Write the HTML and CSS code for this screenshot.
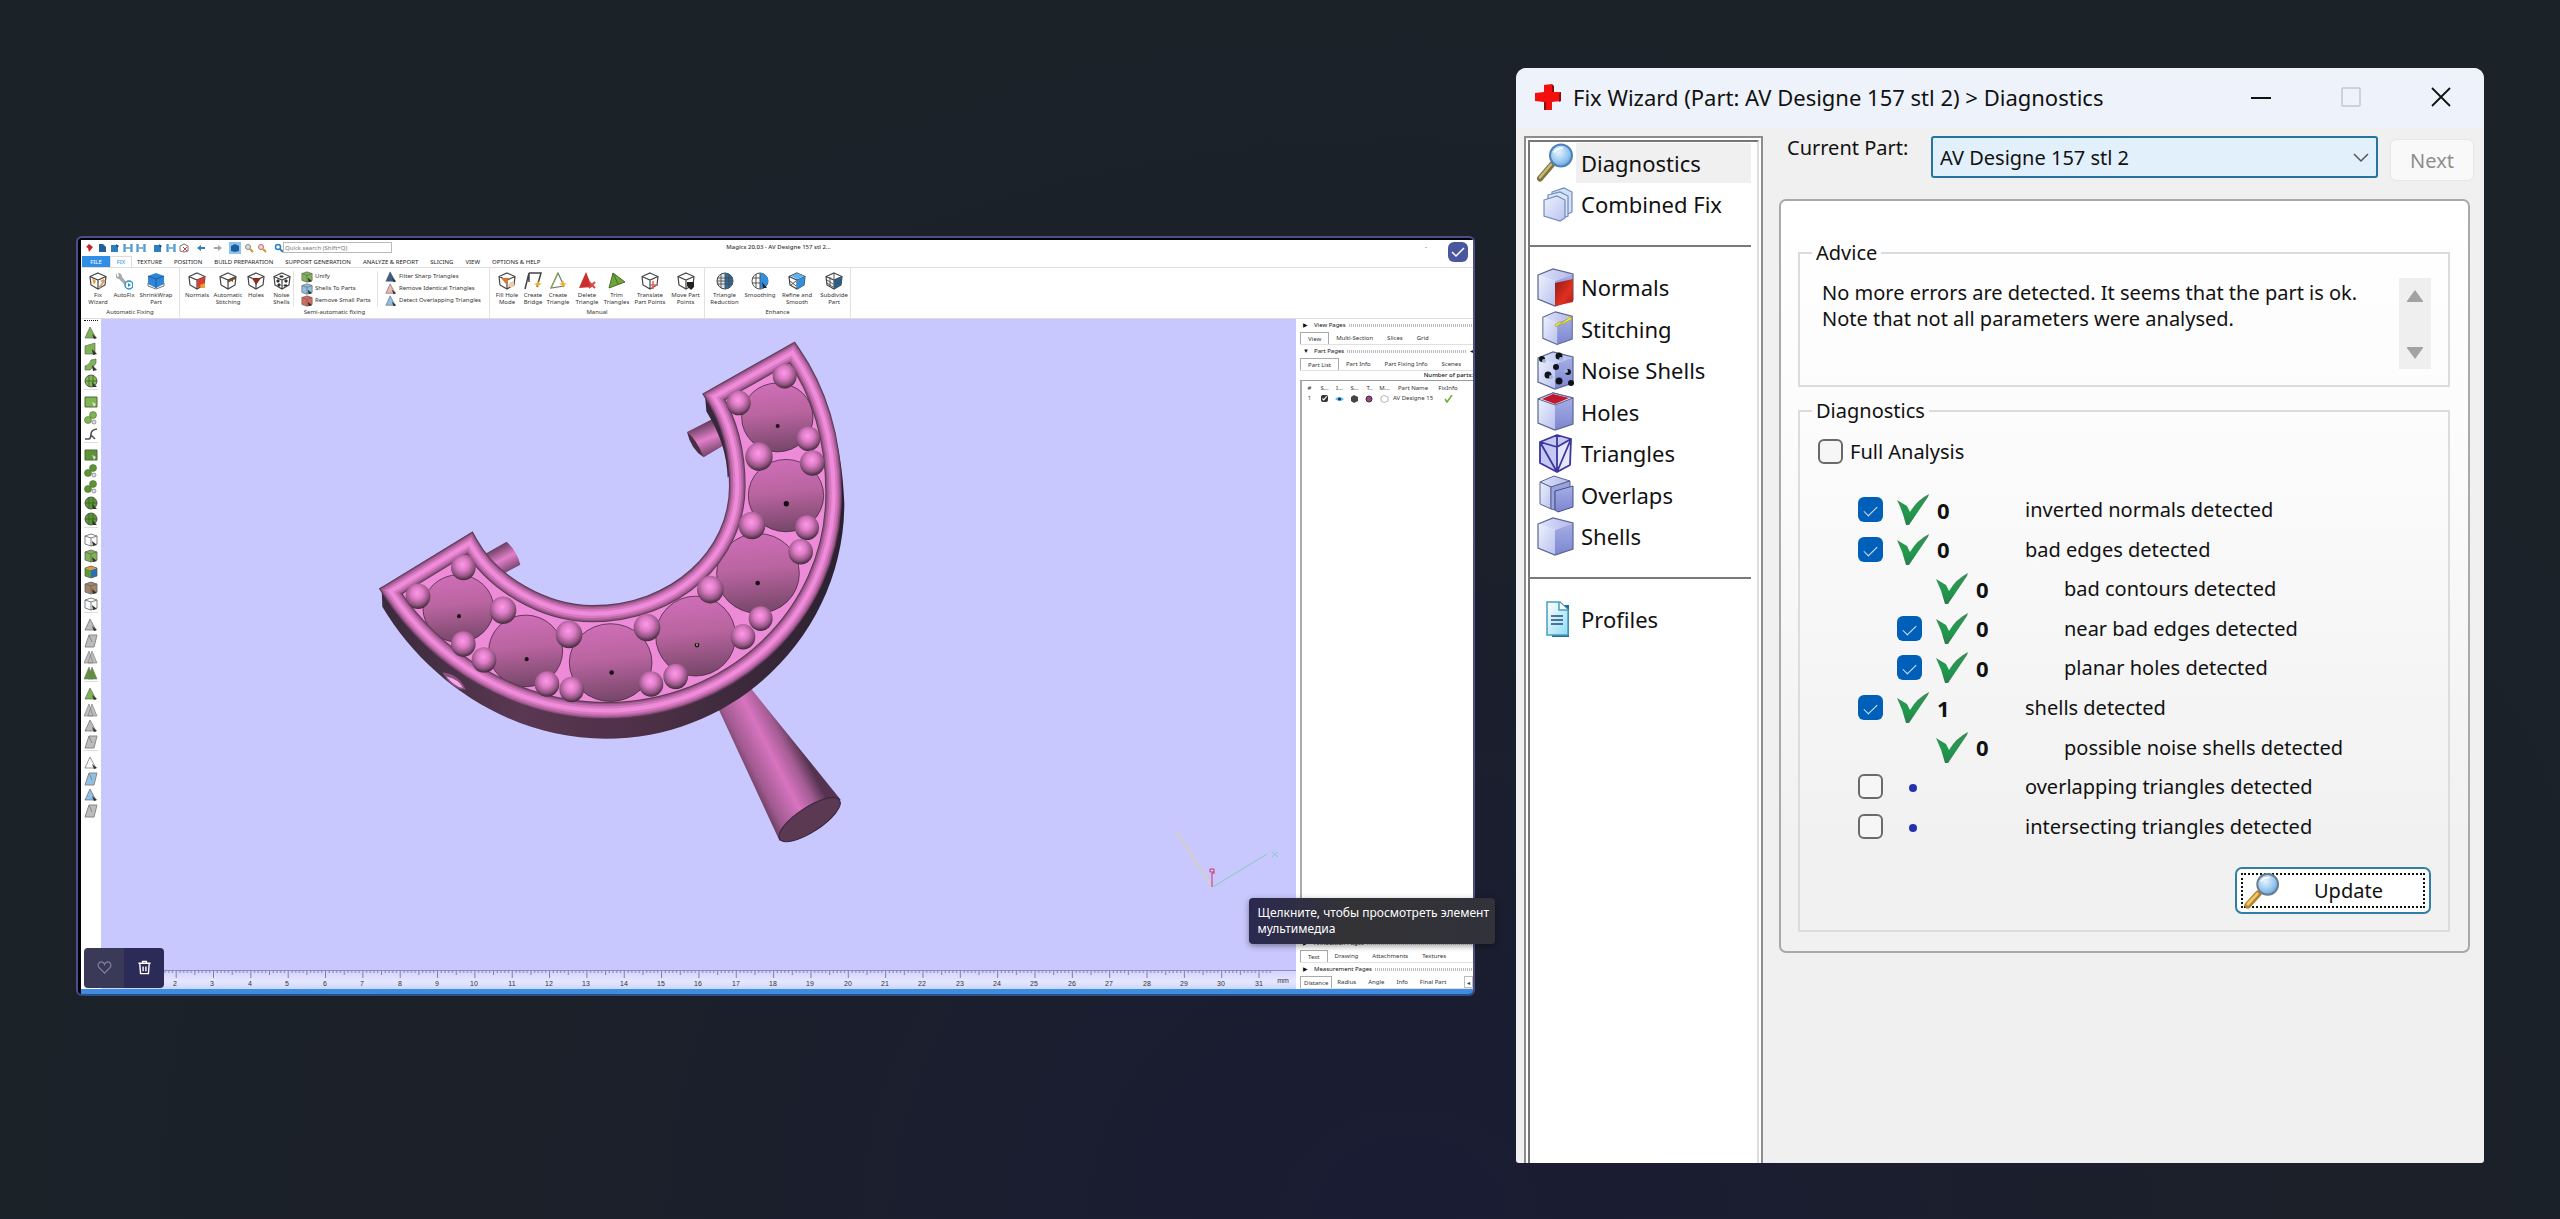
FILE: index.html
```html
<!DOCTYPE html>
<html lang="ru">
<head>
<meta charset="utf-8">
<title>Fix Wizard</title>
<link rel="stylesheet" href="styles.css">
</head>
<body>
<svg class="defs" aria-hidden="true">
  <defs>
    <linearGradient id="faceL" x1="0" y1="0" x2="1" y2="1"><stop offset="0" stop-color="#eef2fd"/><stop offset="1" stop-color="#b9c2ee"/></linearGradient>
    <linearGradient id="faceR" x1="0" y1="0" x2="0" y2="1"><stop offset="0" stop-color="#a5aee6"/><stop offset="1" stop-color="#7d86cf"/></linearGradient>
    <linearGradient id="faceT" x1="0" y1="0" x2="1" y2="0"><stop offset="0" stop-color="#dfe3fa"/><stop offset="1" stop-color="#b4b8ea"/></linearGradient>
    <linearGradient id="redFace" x1="0" y1="0" x2="1" y2="1"><stop offset="0" stop-color="#8f1a1a"/><stop offset=".6" stop-color="#e0301f"/><stop offset="1" stop-color="#b01c1c"/></linearGradient>
    <radialGradient id="lens" cx=".4" cy=".35" r=".7"><stop offset="0" stop-color="#e6f4fe"/><stop offset=".7" stop-color="#8dc1ee"/><stop offset="1" stop-color="#5d97d0"/></radialGradient>
    <linearGradient id="tickG" x1="0" y1="0" x2="0" y2="1"><stop offset="0" stop-color="#3f8a5c"/><stop offset=".6" stop-color="#1f9a4b"/><stop offset="1" stop-color="#2f7a50"/></linearGradient>
    <linearGradient id="page" x1="0" y1="0" x2="1" y2="1"><stop offset="0" stop-color="#fff"/><stop offset="1" stop-color="#8fdcf5"/></linearGradient>
    <linearGradient id="cone" x1=".45" y1="0" x2=".55" y2="1"><stop offset="0" stop-color="#cf6eb8"/><stop offset=".45" stop-color="#b9649f"/><stop offset="1" stop-color="#754669"/></linearGradient>
    <radialGradient id="ball" cx=".47" cy=".38" r=".62"><stop offset="0" stop-color="#fb9ae6"/><stop offset=".4" stop-color="#dd7bc6"/><stop offset=".75" stop-color="#945583"/><stop offset="1" stop-color="#3f273a"/></radialGradient>
    <linearGradient id="handle" gradientUnits="userSpaceOnUse" x1="1150" y1="1320" x2="1320" y2="1230"><stop offset="0" stop-color="#5a3652"/><stop offset=".2" stop-color="#a05a90"/><stop offset=".55" stop-color="#d874c0"/><stop offset=".8" stop-color="#a25c92"/><stop offset="1" stop-color="#553350"/></linearGradient>
    <linearGradient id="pegA" gradientUnits="userSpaceOnUse" x1="1025" y1="295" x2="1060" y2="390"><stop offset="0" stop-color="#5a3652"/><stop offset=".5" stop-color="#e37fcb"/><stop offset="1" stop-color="#6a3f62"/></linearGradient>
    <linearGradient id="pegB" gradientUnits="userSpaceOnUse" x1="405" y1="655" x2="445" y2="735"><stop offset="0" stop-color="#5a3652"/><stop offset=".5" stop-color="#e37fcb"/><stop offset="1" stop-color="#6a3f62"/></linearGradient>
    <linearGradient id="side" x1="0" y1="0" x2="1" y2="0"><stop offset="0" stop-color="#3a2a3c"/><stop offset=".3" stop-color="#5a3752"/><stop offset=".6" stop-color="#4b2f45"/><stop offset="1" stop-color="#2a2130"/></linearGradient>
    <path id="band" d="M95 785 332 645C400 765 560 850 700 850 950 850 1135 680 1135 480 1135 370 1110 290 1065 220L1300 92C1378 200 1424 340 1424 500 1424 860 1110 1131 740 1131 470 1131 230 985 95 785z"/>
  </defs>

  <symbol id="s-find" viewBox="0 0 37 38"><path d="M3 35 15 21" stroke="#7d7340" stroke-width="6" stroke-linecap="round"/><path d="M3 34 14 21" stroke="#c9b878" stroke-width="2.500" stroke-linecap="round"/><circle cx="24" cy="12" r="11" fill="url(#lens)" stroke="#4d82b8" stroke-width="2"/><path d="M17 9q3-5 9-4" stroke="#fff" stroke-width="2" fill="none"/></symbol>
  <symbol id="s-find2" viewBox="0 0 37 38"><path d="M4 34 15 22" stroke="#b5822f" stroke-width="7" stroke-linecap="round"/><path d="M4 33 14 22" stroke="#f3c868" stroke-width="3" stroke-linecap="round"/><circle cx="25" cy="12" r="11" fill="url(#lens)" stroke="#6a7d90" stroke-width="2"/><path d="M18 9q3-5 9-4" stroke="#fff" stroke-width="2" fill="none"/></symbol>
  <symbol id="s-box" viewBox="0 0 37 39"><path d="M1 7 16 1 36 6 18 13z" fill="url(#faceT)"/><path d="M1 7 18 13V38L1 31z" fill="url(#faceL)"/><path d="M18 13 36 6V32L18 38z" fill="url(#faceR)"/><path d="M1 7 16 1 36 6V32L18 38 1 31z" fill="none" stroke="#5a6590" stroke-width="1.200"/></symbol>
  <symbol id="s-combined" viewBox="0 0 37 39"><g stroke="#6f8cba" stroke-width="1.200"><path d="M15 7 27 3 35 7V27L29 30 15 26z" fill="#d3e0f6"/><path d="M11 10 23 7 31 11V31L25 33 11 29z" fill="#dbe6f8"/><path d="M7 15 20 11 28 15V33L23 36 7 31z" fill="url(#faceL)"/></g></symbol>
  <symbol id="s-normals" viewBox="0 0 37 39"><use href="#s-box"/><path d="M18 15 36 11V34L18 38z" fill="url(#redFace)"/></symbol>
  <symbol id="s-stitch" viewBox="0 0 37 39"><g transform="translate(5 2) scale(.84 .88)"><use href="#s-box" width="37" height="39"/></g><path d="m18 16 4-3 3 1 8-6 2 2-9 5-3 0-4 3z" fill="#f5ec28" stroke="#a8a020" stroke-width=".7"/></symbol>
  <symbol id="s-noise" viewBox="0 0 37 39"><use href="#s-box"/><g fill="#10131c"><circle cx="5" cy="8" r="3"/><circle cx="22" cy="5" r="3.500"/><circle cx="19" cy="16" r="3"/><circle cx="11" cy="24" r="3.500"/><circle cx="31" cy="21" r="3"/><circle cx="22" cy="30" r="3.500"/><circle cx="34" cy="32" r="3"/></g><g fill="#9fb4d8"><circle cx="7" cy="10" r="2"/><circle cx="24" cy="8" r="2"/><circle cx="14" cy="26" r="2"/><circle cx="29" cy="20" r="2"/></g></symbol>
  <symbol id="s-holes" viewBox="0 0 37 39"><use href="#s-box"/><path d="M1 7 16 1 36 6 18 13z" fill="#dfe3fa" stroke="#5a6590"/><path d="M5 7 16 2 32 6 18 12z" fill="#c0182c"/></symbol>
  <symbol id="s-tri" viewBox="0 0 37 39"><path d="M3 8 20 1 34 5 33 31 20 38 3 29z" fill="#c5c8f3"/><path d="M20 13 34 5 33 31 20 38z" fill="#e6e6fb"/><path d="M3 8 20 1 34 5 20 13zM3 8V29L20 38V13M20 38 33 31 34 5 20 38 3 8M20 1V13" fill="none" stroke="#3b369c" stroke-width="1.800" stroke-linejoin="round"/></symbol>
  <symbol id="s-over" viewBox="0 0 37 39"><path d="M3 7 17 1 33 6 14 12z" fill="url(#faceT)" stroke="#5a6590"/><path d="M3 7 14 12V34L3 29z" fill="url(#faceL)" stroke="#5a6590"/><path d="M14 12 33 6V14L18 16V35L14 34z" fill="#9aa3de" stroke="#5a6590"/><path d="M18 16 36 11V32L21 37 18 35z" fill="url(#faceR)" stroke="#46508c"/></symbol>
  <symbol id="s-prof" viewBox="0 0 37 39"><path d="M13 4H30V36H13z" fill="#1e6f92" transform="translate(2 1)"/><path d="M10 2H23L31 10V35H10z" fill="url(#page)" stroke="#4b9cc0" stroke-width="1.500"/><path d="M22 2V10H31" fill="#fff" stroke="#4b9cc0" stroke-width="1.500"/><path d="M14 16h12M14 20h12M14 24h12" stroke="#1f4f7e" stroke-width="1.600"/></symbol>
  <symbol id="s-tick" viewBox="0 0 32 31"><path d="M0 6 10 12 13 18Q20 6 32 0L31 3 12 31H9Q6 18 0 6z" fill="url(#tickG)"/></symbol>

  <symbol id="r-cube" viewBox="0 0 18 18"><path d="M9 1 17 4.500 16 13 9 17 2 13 1 4.500z" fill="#fff"/><path d="M9 1 17 4.500 16 13 9 17 2 13 1 4.500zM1 4.500 9 8 17 4.500M9 8V17" fill="none" stroke="#444" stroke-width="1.200"/></symbol>
  <symbol id="r-wiz" viewBox="0 0 18 18"><use href="#r-cube"/><path d="m3 6 4 3-2 4zM11 9l4-2v4z" fill="#e8953a"/><path d="m10 16 6-8" stroke="#c9a27a" stroke-width="2"/></symbol>
  <symbol id="r-auto" viewBox="0 0 18 18"><path d="M2 1q-3 5 2 6l6 6 2-2-5-6q0-4-4-4l1 3-2 1z" fill="#a9a9a9"/><circle cx="14" cy="13" r="4" fill="#fff" stroke="#2a8fd0" stroke-width="1.500"/><path d="m13 11 3 2-3 2z" fill="#2a8fd0"/></symbol>
  <symbol id="r-wrap" viewBox="0 0 18 18"><path d="M9 1 17 4v8l-8 4-8-4V4z" fill="#2f86d8"/><path d="M1 4 9 7l8-3M9 7v9" stroke="#1b5ea0" fill="none"/><path d="M1 11v3l8 3 8-3v-3" fill="none" stroke="#777"/></symbol>
  <symbol id="r-norm" viewBox="0 0 18 18"><use href="#r-cube"/><path d="M9 8 17 4.500 16 13 9 16z" fill="#d8402e"/><path d="m12 13 5-2v5h-4z" fill="#f0a030"/></symbol>
  <symbol id="r-stitch" viewBox="0 0 18 18"><use href="#r-cube"/><path d="m9 8 8-4v3l-3 1v2l-2-1-3 2z" fill="#6b5030"/></symbol>
  <symbol id="r-hole" viewBox="0 0 18 18"><use href="#r-cube"/><path d="M5 6h9l-5 7z" fill="#8e2c20"/></symbol>
  <symbol id="r-noise" viewBox="0 0 18 18"><use href="#r-cube"/><path d="M4 8h2v2H4zM7 4h3v1H7zM12 8h2v2h-2zM5 12h2v2H5zM11 13h3v1h-3z" fill="#333" stroke="#333"/></symbol>
  <symbol id="r-fill" viewBox="0 0 18 18"><use href="#r-cube"/><path d="M3 6h8l-3 6z" fill="#d9762c"/><path d="M10 15q0-5 6-6v6z" fill="#f3c9a0"/></symbol>
  <symbol id="r-bridge" viewBox="0 0 18 18"><path d="M5 1h12l-4 14M5 1 1 17M5 1v9" fill="none" stroke="#444" stroke-width="1.500"/><path d="m14 8 1 3 3 1-3 1-1 3-1-3-3-1 3-1z" fill="#f0b020"/></symbol>
  <symbol id="r-ctri" viewBox="0 0 18 18"><path d="M9 1 2 16 15 14z" fill="none" stroke="#777" stroke-width="1.200"/><path d="M2 16 9 1" stroke="#7fae3e" stroke-width="1.200"/><path d="m14 8 1 3 3 1-3 1-1 3-1-3-3-1 3-1z" fill="#f0b020"/></symbol>
  <symbol id="r-del" viewBox="0 0 18 18"><path d="M8 0 1 16 14 15z" fill="#c92f2f"/><path d="m11 10 6 6m0-6-6 6" stroke="#e2453c" stroke-width="2"/></symbol>
  <symbol id="r-trim" viewBox="0 0 18 18"><path d="M5 1 1 16 17 10z" fill="#6fa53c" stroke="#476f22"/><path d="m5 1 5 11" stroke="#476f22"/></symbol>
  <symbol id="r-trans" viewBox="0 0 18 18"><use href="#r-cube"/><path d="M12 9v8M9 13h8" stroke="#e06060" stroke-width="1.500"/></symbol>
  <symbol id="r-move" viewBox="0 0 18 18"><use href="#r-cube"/><path d="M10 10h7v5l-3 3-4-4z" fill="#222"/></symbol>
  <symbol id="r-red" viewBox="0 0 18 18"><circle cx="9" cy="9" r="8" fill="#dbe4ea" stroke="#444"/><path d="M9 1a8 8 0 0 1 0 16z" fill="#2f6f9f"/><path d="M5 2v14M9 1v16M13 2v14M1 6h16M1 9h16M1 12h16" stroke="#444" stroke-width=".8"/></symbol>
  <symbol id="r-smooth" viewBox="0 0 18 18"><circle cx="9" cy="9" r="8" fill="#fff" stroke="#555"/><path d="M9 1a8 8 0 0 1 0 16z" fill="#2f8fe0"/><path d="M5 2v14M9 1v16M1 6h8M1 11h8" stroke="#555"/><path d="m11 10 5 6h-4z" fill="#223"/></symbol>
  <symbol id="r-refine" viewBox="0 0 18 18"><use href="#r-cube"/><path d="M9 8 17 4.500 16 13 9 17z" fill="#2f8fe0"/><path d="M3 4 9 1l7 3-7 3z" fill="#5fb0ee"/><path d="m2 9 6 5M3 13 8 9" stroke="#555"/></symbol>
  <symbol id="r-sub" viewBox="0 0 18 18"><use href="#r-cube"/><path d="M9 8 17 4.500 16 13 9 17z" fill="#2d5f85"/><path d="m2 8 6 4M2 11l6 4M5 5v9M9 1v7" stroke="#555"/></symbol>

  <symbol id="t-tri" viewBox="0 0 14 14"><path d="M6 1 1 12 12 12z" fill="currentColor" stroke="#555" stroke-width=".6"/><path d="m8 8 5 4-3 1z" fill="#333"/></symbol>
  <symbol id="t-plane" viewBox="0 0 14 14"><path d="M1 4 11 1V12L1 12z" fill="currentColor" stroke="#555" stroke-width=".6"/><path d="m8 7 5 5-4 1z" fill="#333"/></symbol>
  <symbol id="t-wave" viewBox="0 0 14 14"><path d="M1 12V8Q6 7 7 2L12 1V5Q9 10 6 12z" fill="currentColor" stroke="#555" stroke-width=".6"/><path d="m8 7 5 5-4 1z" fill="#333"/></symbol>
  <symbol id="t-ball" viewBox="0 0 14 14"><circle cx="7" cy="7" r="6" fill="currentColor" stroke="#444" stroke-width=".8"/><path d="M5 1v12M9 1v12M1 7h12" stroke="#3d5c22" stroke-width=".7"/><path d="m8 8 5 5-4 0z" fill="#333"/></symbol>
  <symbol id="t-rect" viewBox="0 0 14 14"><path d="M1 2H13V12H1z" fill="currentColor" stroke="#4f6b33"/><path d="m8 7 4 2-2 3z" fill="#ddd"/></symbol>
  <symbol id="t-blob" viewBox="0 0 14 14"><circle cx="9" cy="4" r="3.500" fill="currentColor" stroke="#4f6b33" stroke-width=".6"/><circle cx="4" cy="9" r="3.500" fill="currentColor" stroke="#4f6b33" stroke-width=".6"/><circle cx="10" cy="11" r="2" fill="#ddd" stroke="#666" stroke-width=".6"/></symbol>
  <symbol id="t-curve" viewBox="0 0 14 14"><path d="M1 12H5Q7 11 7 7T13 2M7 8l4 4" fill="none" stroke="#555" stroke-width="1.600"/></symbol>
  <symbol id="t-cube" viewBox="0 0 14 14"><path d="M7 1 13 3V11L7 13 1 11V3z" fill="currentColor" stroke="#666" stroke-width=".8"/><path d="M1 3 7 5 13 3M7 5V13" fill="none" stroke="#666" stroke-width=".8"/><path d="m8 8 5 4-4 1z" fill="#333"/></symbol>
  <symbol id="t-multi" viewBox="0 0 14 14"><path d="M7 1 13 3 7 5 1 3z" fill="#e6962e"/><path d="M1 3 7 5V13L1 11z" fill="#5f9a35"/><path d="M7 5 13 3V11L7 13z" fill="#2c70b8"/><path d="M7 1 13 3V11L7 13 1 11V3z" fill="none" stroke="#555" stroke-width=".7"/></symbol>
  <symbol id="t-para" viewBox="0 0 14 14"><path d="M5 1H13L10 13H1z" fill="currentColor" stroke="#888"/><path d="m5 1 3 7" stroke="#888"/></symbol>
  <symbol id="t-twin" viewBox="0 0 14 14"><path d="M5 1 0 13H9zM8 1 4 13H13z" fill="currentColor" stroke="#777" stroke-width=".6"/></symbol>

  <symbol id="q-doc" viewBox="0 0 10 10"><path d="M2 1h4l3 3v5H2z" fill="#1f5f9c"/></symbol>
  <symbol id="q-open" viewBox="0 0 10 10"><path d="M1 2h7v7H1z" fill="#2d7fc0"/><path d="m6 1 3 2-2 2z" fill="#174f80"/></symbol>
  <symbol id="q-save" viewBox="0 0 10 10"><path d="M1 1h8v8H1z" fill="#7fb6dc"/><path d="M3 1h4v3H3zM3 6h4v3H3z" fill="#fff"/><path d="M1 1v8M9 1v8" stroke="#2d7fc0"/></symbol>
</svg>

<main class="stage">
  <section class="media" aria-label="Magics">
    <div class="shot">
      <header class="qat">
        <svg class="q"><path d="M2 4 5 1 9 4 5 9 4 5z" fill="#c8232c"/></svg>
        <svg class="q"><use href="#q-doc"/></svg>
        <svg class="q"><use href="#q-open"/></svg>
        <svg class="q"><use href="#q-save"/></svg>
        <svg class="q"><use href="#q-save"/></svg>
        <svg class="q q-gap"><use href="#q-open"/></svg>
        <svg class="q"><use href="#q-save"/></svg>
        <svg class="q"><path d="M1 3 5 1l4 2v5L5 9 1 8z" fill="#fff" stroke="#777"/><path d="m4 4 4 4m0-4L4 8" stroke="#d33" stroke-width="1"/></svg>
        <svg class="q q-gap"><path d="M1 5 5 2v2h4v2H5v2z" fill="#2d7fc0"/></svg>
        <svg class="q q-gap"><path d="M9 5 5 2v2H1v2h4v2z" fill="#a5a5a5"/></svg>
        <span class="q-on"><svg class="q"><path d="M1 3 5 1l4 2v5L5 9 1 8z" fill="#1b5f9c"/></svg></span>
        <svg class="q"><circle cx="4" cy="4" r="2.500" fill="#ddd" stroke="#888"/><path d="m6 6 3 3" stroke="#e0902e" stroke-width="2"/></svg>
        <svg class="q"><circle cx="4" cy="4" r="2.500" fill="#ddd" stroke="#c66"/><path d="m6 6 3 3" stroke="#e0902e" stroke-width="2"/></svg>
        <svg class="q q-gap"><circle cx="4" cy="4" r="2.500" fill="none" stroke="#2d7fc0" stroke-width="1.500"/><path d="m6 6 3 3" stroke="#2d7fc0" stroke-width="2"/></svg>
        <input class="search" aria-label="Quick search" placeholder="Quick search (Shift+Q)">
        <span class="app-title">Magics 20.03 - AV Designe 157 stl 2...</span>
        <span class="winmin">-</span>
      </header>
      <nav class="tabs">
        <a class="file" href="#file">FILE</a><a class="current" href="#fix">FIX</a><a href="#texture">TEXTURE</a><a href="#position">POSITION</a><a href="#build">BUILD PREPARATION</a><a href="#support">SUPPORT GENERATION</a><a href="#analyze">ANALYZE &amp; REPORT</a><a href="#slicing">SLICING</a><a href="#view">VIEW</a><a href="#help">OPTIONS &amp; HELP</a>
      </nav>
      <div class="ribbon">
        <section class="group g1">
          <div class="tools">
            <button><svg><use href="#r-wiz"/></svg>Fix<br>Wizard</button>
            <button><svg><use href="#r-auto"/></svg>AutoFix</button>
            <button><svg><use href="#r-wrap"/></svg>ShrinkWrap<br>Part</button>
          </div>
          <h2>Automatic Fixing</h2>
        </section>
        <section class="group g2">
          <div class="tools">
            <button><svg><use href="#r-norm"/></svg>Normals</button>
            <button><svg><use href="#r-stitch"/></svg>Automatic<br>Stitching</button>
            <button><svg><use href="#r-hole"/></svg>Holes</button>
            <button><svg><use href="#r-noise"/></svg>Noise<br>Shells</button>
            <div class="list">
              <button><svg class="c-green"><use href="#t-cube"/></svg>Unify</button>
              <button><svg class="c-sky"><use href="#t-cube"/></svg>Shells To Parts</button>
              <button><svg class="c-red"><use href="#t-cube"/></svg>Remove Small Parts</button>
            </div>
            <div class="list">
              <button><svg class="c-navy"><use href="#t-tri"/></svg>Filter Sharp Triangles</button>
              <button><svg class="c-rose"><use href="#t-tri"/></svg>Remove Identical Triangles</button>
              <button><svg class="c-sky"><use href="#t-tri"/></svg>Detect Overlapping Triangles</button>
            </div>
          </div>
          <h2>Semi-automatic fixing</h2>
        </section>
        <section class="group g3">
          <div class="tools">
            <button><svg><use href="#r-fill"/></svg>Fill Hole<br>Mode</button>
            <button><svg><use href="#r-bridge"/></svg>Create<br>Bridge</button>
            <button><svg><use href="#r-ctri"/></svg>Create<br>Triangle</button>
            <button><svg><use href="#r-del"/></svg>Delete<br>Triangle</button>
            <button><svg><use href="#r-trim"/></svg>Trim<br>Triangles</button>
            <button><svg><use href="#r-trans"/></svg>Translate<br>Part Points</button>
            <button><svg><use href="#r-move"/></svg>Move Part<br>Points</button>
          </div>
          <h2>Manual</h2>
        </section>
        <section class="group g4">
          <div class="tools">
            <button><svg><use href="#r-red"/></svg>Triangle<br>Reduction</button>
            <button><svg><use href="#r-smooth"/></svg>Smoothing</button>
            <button><svg><use href="#r-refine"/></svg>Refine and<br>Smooth</button>
            <button><svg><use href="#r-sub"/></svg>Subdivide<br>Part</button>
          </div>
          <h2>Enhance</h2>
        </section>
      </div>
      <div class="work">
        <aside class="toolbar">
          <div class="c-green"><svg><use href="#t-tri"/></svg><svg><use href="#t-plane"/></svg><svg><use href="#t-wave"/></svg><svg><use href="#t-ball"/></svg></div>
          <div class="c-green"><svg><use href="#t-rect"/></svg><svg><use href="#t-blob"/></svg><svg><use href="#t-curve"/></svg></div>
          <div class="c-leaf"><svg><use href="#t-rect"/></svg><svg><use href="#t-blob"/></svg><svg><use href="#t-blob"/></svg><svg><use href="#t-ball"/></svg><svg><use href="#t-ball"/></svg></div>
          <div><svg class="c-pale"><use href="#t-cube"/></svg><svg class="c-green"><use href="#t-cube"/></svg><svg><use href="#t-multi"/></svg><svg class="c-brown"><use href="#t-cube"/></svg><svg class="c-pale"><use href="#t-cube"/></svg></div>
          <div class="c-gray"><svg><use href="#t-tri"/></svg><svg><use href="#t-para"/></svg><svg><use href="#t-twin"/></svg><svg class="c-leaf"><use href="#t-twin"/></svg></div>
          <div class="c-gray"><svg class="c-green"><use href="#t-tri"/></svg><svg><use href="#t-twin"/></svg><svg><use href="#t-tri"/></svg><svg><use href="#t-para"/></svg></div>
          <div class="c-gray"><svg class="c-pale"><use href="#t-tri"/></svg><svg class="c-sky"><use href="#t-para"/></svg><svg class="c-sky"><use href="#t-tri"/></svg><svg><use href="#t-para"/></svg></div>
        </aside>
        <div class="view">
          <svg class="scene" viewBox="101 318 1195 651" role="img" aria-label="AV Designe 157 stl 2">
            <g transform="translate(359 320) scale(.33333 .34438)">
              <path d="M1068 1105 1175 1066 1445 1390Q1380 1430 1262 1510z" fill="url(#handle)"/>
              <ellipse cx="1352" cy="1448" rx="106" ry="36" transform="rotate(-32 1352 1448)" fill="#5b3953" stroke="#38233a" stroke-width="3"/>
              <path d="M984 322 1062 284 1110 352 1034 396z" fill="url(#pegA)"/><path d="M984 322Q996 372 1034 396 1014 345 984 322z" fill="#4a2e44"/>
              <path d="M375 678 443 641Q474 668 484 708L410 746z" fill="url(#pegB)"/>
              <path d="M68 778 70 830C200 1042 450 1213 740 1213 1140 1213 1456 900 1456 530 1450 350 1400 190 1300 85L1424 500C1424 860 1110 1131 740 1131 470 1131 230 985 95 785z" fill="url(#side)"/>
              <path d="M1038 215 1042 262C1085 330 1104 390 1106 455L1140 420 1080 230z" fill="#38273a"/>
              <path d="M250 1020Q300 1025 320 1070 280 1072 250 1020z" fill="#8a5480"/><path d="M262 1032Q300 1040 312 1066 285 1060 262 1032z" fill="#f7a8ea"/>
              <use href="#band" fill="#ee8bd9"/>
              <g fill="url(#cone)" stroke="#2c1a2a" stroke-width="2">
                <ellipse cx="1255" cy="280" rx="107" ry="100"/><ellipse cx="1281" cy="507" rx="113" ry="105"/><ellipse cx="1197" cy="733" rx="124" ry="116"/><ellipse cx="1010" cy="915" rx="120" ry="116"/><ellipse cx="755" cy="992" rx="124" ry="113"/><ellipse cx="500" cy="958" rx="111" ry="104"/><ellipse cx="298" cy="835" rx="106" ry="98"/>
              </g>
              <g fill="#190d18"><circle cx="1256" cy="305" r="6"/><circle cx="1282" cy="531" r="8"/><circle cx="1196" cy="761" r="7"/><circle cx="1014" cy="941" r="7"/><circle cx="758" cy="1021" r="7"/><circle cx="503" cy="982" r="6"/><circle cx="300" cy="857" r="6"/></g>
              <path d="M1011 936h6v8h-6z" fill="#6b9a3a"/>
              <g fill="none" stroke-linejoin="miter">
                <use href="#band" class="rim rim-a"/><use href="#band" class="rim rim-b"/><use href="#band" class="rim rim-c"/><use href="#band" class="rim rim-d"/><use href="#band" class="rim rim-e"/>
              </g>
              <g fill="url(#ball)">
                <circle cx="1277" cy="160" r="36"/><circle cx="1139" cy="238" r="36"/><circle cx="1348" cy="342" r="36"/><circle cx="1360" cy="412" r="37"/><circle cx="1200" cy="394" r="41"/><circle cx="1179" cy="594" r="40"/><circle cx="1344" cy="600" r="36"/><circle cx="1325" cy="670" r="37"/><circle cx="1054" cy="780" r="40"/><circle cx="1205" cy="864" r="36"/><circle cx="1152" cy="917" r="37"/><circle cx="864" cy="890" r="40"/><circle cx="950" cy="1032" r="37"/><circle cx="876" cy="1054" r="37"/><circle cx="630" cy="910" r="40"/><circle cx="564" cy="1054" r="37"/><circle cx="638" cy="1070" r="37"/><circle cx="432" cy="840" r="40"/><circle cx="375" cy="984" r="37"/><circle cx="313" cy="938" r="37"/><circle cx="313" cy="716" r="37"/><circle cx="177" cy="799" r="37"/>
              </g>
            </g>
            <path d="M1212 886 1176 830" stroke="#d2ccd6" stroke-width="3"/>
            <path d="M1213 886 1267 853" stroke="#83cdb8"/><path d="m1272 851 6 5m0-5-6 5" stroke="#83cdb8"/>
            <path d="M1212 886V872h3M1210 868h4v3h-4z" stroke="#d0306a" fill="none"/>
          </svg>
          <svg class="ruler" viewBox="0 0 1195 19" preserveAspectRatio="none">
            <defs><pattern id="ticks" width="37.340" height="12" patternUnits="userSpaceOnUse"><path d="M.5 0V8M19.200 0V5M4.200 0V3M8 0V3M11.700 0V3M15.400 0V3M22.900 0V3M26.600 0V3M30.400 0V3M34.100 0V3" stroke="#7d7da8"/></pattern></defs>
            <path d="M0 .5H1195" stroke="#8e8ec0"/><rect width="1172" height="9" fill="url(#ticks)"/>
            <g class="nums"><text x="74">2</text><text x="111">3</text><text x="149">4</text><text x="186">5</text><text x="224">6</text><text x="261">7</text><text x="299">8</text><text x="336">9</text><text x="373">10</text><text x="411">11</text><text x="448">12</text><text x="485">13</text><text x="523">14</text><text x="560">15</text><text x="597">16</text><text x="635">17</text><text x="672">18</text><text x="709">19</text><text x="747">20</text><text x="784">21</text><text x="821">22</text><text x="859">23</text><text x="896">24</text><text x="933">25</text><text x="971">26</text><text x="1008">27</text><text x="1046">28</text><text x="1083">29</text><text x="1120">30</text><text x="1158">31</text><text x="1182" dy="-3">mm</text></g>
          </svg>
        </div>
        <aside class="pages">
          <h3><i>▶</i>View Pages<span class="dots"></span></h3>
          <nav><a class="on" href="#v">View</a><a href="#ms">Multi-Section</a><a href="#sl">Slices</a><a href="#gr">Grid</a></nav>
          <h3><i>▼</i>Part Pages<span class="dots"></span>◂</h3>
          <nav><a class="on" href="#pl">Part List</a><a href="#pi">Part Info</a><a href="#pf">Part Fixing Info</a><a href="#sc">Scenes</a></nav>
          <p>Number of parts:</p>
          <div class="parts">
            <table>
              <thead><tr><th>#</th><th>S...</th><th>I...</th><th>S...</th><th>T..</th><th>M...</th><th>Part Name</th><th>FixInfo</th></tr></thead>
              <tbody><tr><td>1</td><td><input type="checkbox" class="mini" aria-label="AV Designe 15" checked></td><td><svg viewBox="0 0 9 8"><path d="M0 4Q4 0 9 4 5 8 0 4z" fill="#5bb8ee"/><circle cx="4.500" cy="4" r="1.500" fill="#135"/></svg></td><td><svg viewBox="0 0 9 8"><path d="M1 2 4 0 8 2V6L4 8 1 6z" fill="#444"/></svg></td><td><svg viewBox="0 0 9 8"><circle cx="4" cy="4" r="3" fill="#a0408f" stroke="#333"/></svg></td><td><svg viewBox="0 0 9 8"><path d="M1 2 4 .5 8 2V6L4 7.500 1 6z" fill="#fff" stroke="#999" stroke-width=".7"/></svg></td><td>AV Designe 15</td><td><svg viewBox="0 0 9 8"><path d="M1 4 3 7 8 0" stroke="#6fae3c" stroke-width="1.600" fill="none"/></svg></td></tr></tbody>
            </table>
          </div>
          <h3><i>▶</i>Annotation Pages<span class="dots"></span></h3>
          <nav><a class="on" href="#tx">Text</a><a href="#dr">Drawing</a><a href="#at">Attachments</a><a href="#te">Textures</a></nav>
          <h3><i>▶</i>Measurement Pages<span class="dots"></span></h3>
          <nav class="tight"><a class="on" href="#di">Distance</a><a href="#ra">Radius</a><a href="#an">Angle</a><a href="#in">Info</a><a href="#fp">Final Part</a><button>◂</button></nav>
        </aside>
      </div>
    </div>
    <button class="badge" aria-label="Выбрано"><svg viewBox="0 0 20 20"><path d="m4 10 4 4 8-8" fill="none" stroke="#fff" stroke-width="1.500"/></svg></button>
    <div class="actions">
      <button aria-label="Нравится"><svg viewBox="0 0 16 16"><path d="M8 14 2 8C0 5 2 2 4.500 2 6 2 7.500 3 8 4.500 8.500 3 10 2 11.500 2 14 2 16 5 14 8z" fill="none" stroke="#8585a3" stroke-width="1.200"/></svg></button>
      <button aria-label="Удалить"><svg viewBox="0 0 16 16"><path d="M1.500 3.500h13M6 3V1.500h4V3M3 4l.8 10.500h8.400L13 4M6.500 7v5M9.500 7v5" fill="none" stroke="#fff" stroke-width="1.500"/></svg></button>
    </div>
    <div class="tooltip" role="tooltip">Щелкните, чтобы просмотреть элемент<br>мультимедиа</div>
  </section>

  <section class="dialog" aria-label="Fix Wizard">
    <header class="titlebar">
      <svg class="logo" viewBox="0 0 28 28"><path d="M10 2 18 1V9L27 9V18L18 19V27L10 27V19L1 18V10L10 9z" fill="#f40f0f"/><path d="M18 1 20 3V9H18zM27 9V18L25 19V11zM10 19v8l2 0v-8z" fill="#8a0c0c"/></svg>
      <h1>Fix Wizard (Part: AV Designe 157 stl 2) &gt; Diagnostics</h1>
      <button aria-label="Minimize"><svg viewBox="0 0 20 20"><path d="M0 11H20" stroke="#111" stroke-width="2"/></svg></button>
      <button aria-label="Maximize" disabled><svg viewBox="0 0 20 20"><rect x="1" y="1" width="18" height="18" rx="1" fill="none" stroke="#c3c6cc" stroke-width="1.500"/></svg></button>
      <button aria-label="Close"><svg viewBox="0 0 20 20"><path d="m1 1 18 18M19 1 1 19" stroke="#111" stroke-width="1.800"/></svg></button>
    </header>
    <div class="body">
      <nav class="side">
        <div class="side-in">
          <div class="steps">
            <a class="sel" href="#diag"><svg><use href="#s-find"/></svg><span>Diagnostics</span></a>
            <a href="#comb"><svg><use href="#s-combined"/></svg><span>Combined Fix</span></a>
            <hr>
            <a href="#norm"><svg><use href="#s-normals"/></svg><span>Normals</span></a>
            <a href="#stit"><svg><use href="#s-stitch"/></svg><span>Stitching</span></a>
            <a href="#nois"><svg><use href="#s-noise"/></svg><span>Noise Shells</span></a>
            <a href="#hole"><svg><use href="#s-holes"/></svg><span>Holes</span></a>
            <a href="#tria"><svg><use href="#s-tri"/></svg><span>Triangles</span></a>
            <a href="#over"><svg><use href="#s-over"/></svg><span>Overlaps</span></a>
            <a href="#shel"><svg><use href="#s-box"/></svg><span>Shells</span></a>
            <hr>
            <a href="#prof"><svg><use href="#s-prof"/></svg><span>Profiles</span></a>
          </div>
        </div>
      </nav>
      <div class="content">
        <div class="partrow">
          <label for="part">Current Part:</label>
          <div class="pick"><select id="part"><option>AV Designe 157 stl 2</option></select><svg viewBox="0 0 16 10"><path d="m1 1 7 7 7-7" fill="none" stroke="#555" stroke-width="1.500"/></svg></div>
          <button class="next" disabled>Next</button>
        </div>
        <div class="panel">
          <fieldset class="advice">
            <legend>Advice</legend>
            <p>No more errors are detected. It seems that the part is ok.<br>Note that not all parameters were analysed.</p>
            <div class="scroll"><svg viewBox="0 0 16 12"><path d="M8 0 16 11V12H0V11z"/></svg><svg viewBox="0 0 16 12"><path d="M8 12 16 1V0H0V1z"/></svg></div>
          </fieldset>
          <fieldset class="diag">
            <legend>Diagnostics</legend>
            <label class="full"><input type="checkbox" class="box">Full Analysis</label>
            <div class="checks">
              <div class="row"><input type="checkbox" class="box" id="c1" checked><svg><use href="#s-tick"/></svg><b>0</b><label for="c1">inverted normals detected</label></div>
              <div class="row"><input type="checkbox" class="box" id="c2" checked><svg><use href="#s-tick"/></svg><b>0</b><label for="c2">bad edges detected</label></div>
              <div class="row sub"><span></span><svg><use href="#s-tick"/></svg><b>0</b><span>bad contours detected</span></div>
              <div class="row sub"><input type="checkbox" class="box" id="c3" checked><svg><use href="#s-tick"/></svg><b>0</b><label for="c3">near bad edges detected</label></div>
              <div class="row sub"><input type="checkbox" class="box" id="c4" checked><svg><use href="#s-tick"/></svg><b>0</b><label for="c4">planar holes detected</label></div>
              <div class="row"><input type="checkbox" class="box" id="c5" checked><svg><use href="#s-tick"/></svg><b>1</b><label for="c5">shells detected</label></div>
              <div class="row sub"><span></span><svg><use href="#s-tick"/></svg><b>0</b><span>possible noise shells detected</span></div>
              <div class="row"><input type="checkbox" class="box" id="c6"><svg viewBox="0 0 32 31"><circle cx="16" cy="17" r="4" fill="#2430b0"/></svg><b></b><label for="c6">overlapping triangles detected</label></div>
              <div class="row"><input type="checkbox" class="box" id="c7"><svg viewBox="0 0 32 31"><circle cx="16" cy="17" r="4" fill="#2430b0"/></svg><b></b><label for="c7">intersecting triangles detected</label></div>
            </div>
            <button class="update"><span><svg><use href="#s-find2"/></svg>Update</span></button>
          </fieldset>
        </div>
      </div>
    </div>
  </section>
</main>
</body>
</html>
```
FILE: styles.css
```css
* { box-sizing: border-box; }
body {
  margin: 0;
  font-family: "Noto Sans", sans-serif;
  color: #111;
  background: radial-gradient(ellipse at 55% 100%, #1a1c34 0%, #1b2029 45%, #1b2228 75%);
}
a { color: inherit; text-decoration: none; }
button { font: inherit; color: inherit; padding: 0; border: 0; background: none; }
h1, h2, h3, p { margin: 0; font-weight: 400; }
.defs { position: absolute; width: 0; height: 0; }

.stage {
  display: grid;
  grid-template-columns: 1399fr 968fr;
  gap: 41px;
  align-items: center;
  min-height: 100vh;
  padding: 68px 76px 56px;
}

/* media card */
.media {
  position: relative;
  min-width: 0;
  border: 2px solid #4b4f86;
  border-bottom-color: #2c4f86;
  border-radius: 6px;
  background: #02020c;
  padding: 2px 0 0 3px;
}
.shot {
  display: flex;
  flex-direction: column;
  font-size: 6px;
  line-height: 7px;
  color: #333;
  background: #fff;
  border-bottom: 5px solid #3f8be0;
  border-radius: 0 0 4px 0;
  overflow: hidden;
  white-space: nowrap;
}
.qat { display: flex; align-items: center; height: 16px; padding-left: 3px; gap: 3px; }
.q { width: 10px; height: 10px; flex: none; }
.q-gap { margin-left: 4px; }
.q-on { display: flex; justify-content: center; width: 12px; height: 12px; align-items: center; background: #8ec1ee; margin-left: 3px; }
.search { width: 109px; height: 11px; padding: 0 1px; border: 1px solid #b9b9b9; font: inherit; margin-left: -4px; }
.search::placeholder { color: #777; }
.app-title { flex: 1; text-align: center; padding-right: 260px; font-weight: 500; }
.winmin { width: 48px; }
.tabs { display: flex; height: 12px; line-height: 12px; gap: 12px; padding-left: 1px; border-bottom: 1px solid #ddd; color: #222; }
.tabs .file { width: 28px; text-align: center; background: #2f8fe6; color: #fff; margin-right: -12px; }
.tabs .current { width: 22px; text-align: center; color: #2f8fe6; border: 1px solid #ddd; border-bottom: 0; background: #fff; margin-right: -7px; line-height: 11px; }
.ribbon { display: flex; height: 51px; border-bottom: 1px solid #ddd; }
.group { display: flex; flex-direction: column; border-right: 1px solid #e2e2e2; }
.group h2 { font-size: 6px; line-height: 8px; text-align: center; }
.tools { display: grid; height: 40px; }
.tools > button { display: flex; flex-direction: column; align-items: center; padding-top: 4px; }
.tools > button > svg { width: 18px; height: 18px; margin-bottom: 2px; flex: none; }
.g1 .tools { grid-template-columns: 34px 18px 46px; }
.g2 .tools { grid-template-columns: 34px 28px 28px 23px 84px 112px; }
.g3 .tools { grid-template-columns: 34px 18px 32px 26px 33px 34px 37px; }
.g4 .tools { grid-template-columns: 39px 32px 42px 32px; }
.list { display: grid; grid-template-rows: repeat(3, 12px); align-content: center; border-left: 1px solid #e2e2e2; padding-left: 7px; margin: 3px 0; }
.list button { display: flex; align-items: center; gap: 2px; }
.list svg { width: 12px; height: 12px; }
.c-green { color: #7fb554; }
.c-leaf { color: #5d9438; }
.c-pale { color: #fafafa; }
.c-brown { color: #a58468; }
.c-gray { color: #bcbcbc; }
.c-sky { color: #8fc0e4; }
.c-red { color: #d46a60; }
.c-rose { color: #e9b5ae; }
.c-navy { color: #3d5f86; }

.work { display: grid; grid-template-columns: 20px 1fr 177px; }
.toolbar { border-top: 1px dotted #111; margin: 1px 3px 0; padding-top: 4px; }
.toolbar div { display: grid; grid-auto-rows: 16px; place-items: center; border-bottom: 1px solid #ddd; margin-bottom: 4px; }
.toolbar div:last-child { border: 0; }
.toolbar svg { width: 14px; height: 14px; }
.view { display: flex; flex-direction: column; background: #c9c8fe; min-width: 0; }
.scene { width: 100%; display: block; }
.rim-a { stroke: #5e3957; stroke-width: 50px; }
.rim-b { stroke: #8f5281; stroke-width: 44px; }
.rim-c { stroke: #b766a4; stroke-width: 36px; }
.rim-d { stroke: #d878c3; stroke-width: 25px; }
.rim-e { stroke: #ee8cd9; stroke-width: 12px; }
.ruler { width: 100%; height: 19px; background: linear-gradient(#d2d1fe, #e6e6ff 60%, #c9d8fb); }
.nums text { font: 7px "Liberation Sans", sans-serif; fill: #333; text-anchor: middle; transform: translateY(16px); }

.pages { display: flex; flex-direction: column; padding-left: 4px; min-width: 0; overflow: hidden; }
.pages h3 { display: flex; align-items: center; gap: 3px; font-size: 6px; line-height: 8px; height: 13px; color: #111; }
.pages h3 i { width: 11px; font-style: normal; padding-left: 3px; }
.dots { flex: 1; height: 3px; background: repeating-linear-gradient(90deg, #bbb 0 1px, #fff 1px 2px); }
.pages nav { display: flex; height: 13px; gap: 7px; line-height: 12px; border-bottom: 1px solid #e0e0e0; }
.pages nav a { padding-right: 7px; }
.pages nav .on { padding: 0 7px; border: 1px solid #aaa; border-bottom: 0; }
.pages nav.tight .on { padding: 0 3px; }
.pages nav.tight { gap: 5px; }
.pages nav button { border: 1px solid #bbb; width: 9px; margin-left: auto; }
.pages p { text-align: right; line-height: 9px; color: #111; font-weight: 500; }
.parts { flex: 1; border-left: 2px solid #aaa; border-top: 1px solid #999; }
.parts table { border-collapse: collapse; table-layout: fixed; width: 160px; margin-top: 3px; }
.parts th, .parts td { padding: 0; height: 10px; font-weight: 400; text-align: center; overflow: hidden; }
.parts th:nth-child(7) { width: 42px; }
.parts th:nth-child(8) { width: 28px; }
.parts svg { width: 9px; height: 8px; display: block; margin: auto; }
.mini { display: block; width: 7px; height: 7px; margin: auto; accent-color: #333; }

.badge { position: absolute; right: 5px; top: 4px; width: 20px; height: 20px; border-radius: 6px; background: #4a569d; }
.badge svg { display: block; width: 20px; height: 20px; }
.actions { position: absolute; left: 6px; bottom: 6px; display: flex; border-radius: 4px; overflow: hidden; }
.actions button { display: grid; place-items: center; width: 40px; height: 40px; background: #3a3957; }
.actions button + button { background: #2c2b57; }
.actions svg { width: 15px; height: 15px; }
.tooltip {
  position: absolute;
  right: -22px;
  bottom: 50px;
  padding: 7px 6px 7px 9px;
  font-size: 12px;
  line-height: 16px;
  white-space: nowrap;
  color: #fff;
  border-radius: 4px;
  background: linear-gradient(90deg, #2b2950, #333336 40%, #31323a);
  box-shadow: 0 2px 6px #0006;
}

/* dialog */
.dialog {
  align-self: stretch;
  display: flex;
  flex-direction: column;
  min-width: 0;
  border-radius: 10px 10px 3px 3px;
  overflow: hidden;
  background: #f0f0f0;
  font-size: 20px;
}
.titlebar { display: flex; align-items: center; height: 60px; padding: 0 32px 2px 18px; background: #eef3fb; }
.logo { width: 28px; height: 28px; margin-right: 11px; }
.titlebar h1 { flex: 1; font-size: 22px; line-height: 28px; white-space: nowrap; }
.titlebar button { width: 22px; height: 22px; margin-left: 68px; }
.titlebar button svg { display: block; width: 20px; height: 20px; margin: 1px; }
.body { flex: 1; display: grid; grid-template-columns: 239px 1fr; gap: 16px; padding: 8px 14px 0 8px; }
.side { border: 2px solid #8c8c8c; border-bottom: 0; padding: 2px 2px 0 2px; background: #fff; }
.side-in { height: 100%; border: solid #777; border-width: 2px 2px 0; border-right-color: #ddd; font-size: 22px; padding-right: 6px; }
.steps { display: grid; grid-auto-rows: 1fr; height: 498px; align-items: center; }
.steps a { display: flex; align-items: center; padding-left: 7px; }
.steps svg { width: 37px; height: 39px; margin-right: 2px; flex: none; }
.steps span { flex: 1; line-height: 40px; padding-left: 5px; }
.steps .sel span { background: #f0f0f0; }
.steps hr { width: 100%; height: 2px; margin: 0; border: 0; background: #7a7a7a; }
.partrow { display: flex; }
.partrow label { width: 152px; padding-left: 8px; line-height: 24px; }
.pick { position: relative; flex: 1; height: 42px; }
.pick select { appearance: none; width: 100%; height: 42px; padding: 0 7px; font: inherit; color: #111; border: 2px solid #2674a0; border-radius: 3px; background: #e2f0fb; }
.pick svg { position: absolute; right: 9px; top: 17px; width: 16px; height: 10px; }
.next { width: 84px; height: 42px; margin: 3px -4px 0 12px; color: #8d8d8d; background: #f9f9f9; border: 1px solid #e6e6e6; border-radius: 6px; }
.panel { margin-top: 18px; padding: 39px 18px 19px 17px; border: 2px solid #a9a9a9; border-radius: 7px; background: linear-gradient(#fff, #fcfcfc 30%, #f1f1f1 85%); }
fieldset { min-width: 0; margin: 0; padding: 0 17px; border: 2px solid #dcdcdc; }
legend { padding: 0 4px; margin-left: -5px; line-height: 26px; }
.advice { display: flex; justify-content: space-between; height: 147px; }
.advice p { padding: 14px 0 0 5px; line-height: 26px; white-space: nowrap; }
.scroll { display: flex; flex-direction: column; justify-content: space-between; align-items: center; width: 32px; height: 91px; margin-top: 12px; padding: 12px 0 10px; background: #efefef; }
.scroll svg { width: 16px; height: 12px; fill: #a2a2a2; }
.diag { margin-top: 11px; padding-bottom: 16px; }
.full { display: flex; align-items: center; gap: 7px; height: 26px; margin-top: 14px; margin-left: 1px; }
.box { appearance: none; width: 25px; height: 25px; margin: 0; border: 2px solid #6a6a6a; border-radius: 6px; background: #f6f6f6; }
.box:checked { border: 0; background: #005fb8; display: grid; place-items: center; }
.box:checked::before { content: ""; width: 12px; height: 6px; border: solid #d8e8f8; border-width: 0 0 1px 1px; transform: rotate(-45deg); }
.checks { display: grid; grid-auto-rows: 1fr; height: 356px; margin-top: 26px; }
.row { display: grid; grid-template-columns: 39px 40px 88px 1fr; align-items: center; padding-left: 41px; white-space: nowrap; }
.row.sub { padding-left: 80px; }
.row svg { width: 32px; height: 31px; }
.row b { font-size: 22px; }
.update { display: block; width: 196px; height: 47px; margin: 21px 0 0 auto; padding: 4px; border: 2px solid #2e7fa6; border-radius: 7px; background: #fff; }
.update span { display: flex; align-items: center; height: 35px; border: 2px dotted #111; }
.update svg { width: 37px; height: 36px; margin-right: 34px; }
```
